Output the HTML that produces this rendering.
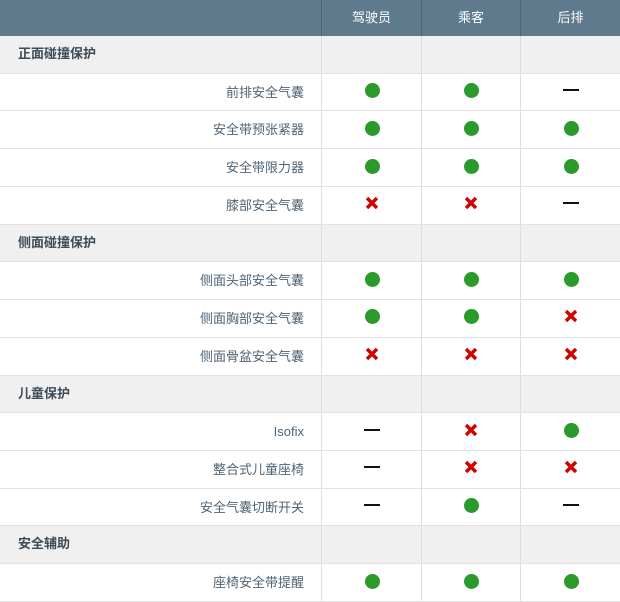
<!DOCTYPE html>
<html><head><meta charset="utf-8"><style>
*{margin:0;padding:0;box-sizing:border-box}
body{width:620px;height:600px;overflow:hidden;background:#fff;font-family:"Liberation Sans","Noto Sans CJK SC",sans-serif;position:relative}
.hd{position:absolute;left:0;top:0;width:620px;height:36px;background:#5e7a8c}
.hc{position:absolute;top:0;height:36px;line-height:36px;color:#fff;font-size:13px;text-align:center;border-left:1px solid #4c6475}
.row{position:absolute;left:0;width:620px;height:37.73px;border-bottom:1px solid #e2e2e2}
.sec{background:#f0f0f0}
.sec .t{position:absolute;left:18px;top:0;line-height:36px;font-size:13px;font-weight:bold;color:#3d4b57}
.lbl{position:absolute;right:316px;top:0;line-height:38px;font-size:13px;color:#4f6475}
.c{position:absolute;top:0;height:100%;border-left:1px solid #dedede}
.i{position:absolute;left:50%;top:50%}
.g{width:15px;height:15px;border-radius:50%;background:#2a9a2a;margin:-9px 0 0 -7px}
.d{width:16px;height:2px;background:#111;margin:-3px 0 0 -8px}
.x{margin:-10px 0 0 -8px;width:16px;height:16px}
</style></head><body>
<div class="hd"></div>
<div class="hc" style="left:321px;width:100px">驾驶员</div>
<div class="hc" style="left:421px;width:99px">乘客</div>
<div class="hc" style="left:520px;width:100px">后排</div>
<div id="t"></div>
<script>
var X='<svg class="i x" viewBox="0 0 16 16"><path d="M3 3L13 13M13 3L3 13" stroke="#d40000" stroke-width="3.4"/></svg>';
var G='<div class="i g"></div>',D='<div class="i d"></div>';
var m={g:G,x:X,d:D};
var rows=[["S","正面碰撞保护"],["前排安全气囊","ggd"],["安全带预张紧器","ggg"],["安全带限力器","ggg"],["膝部安全气囊","xxd"],
["S","侧面碰撞保护"],["侧面头部安全气囊","ggg"],["侧面胸部安全气囊","ggx"],["侧面骨盆安全气囊","xxx"],
["S","儿童保护"],["Isofix","dxg"],["整合式儿童座椅","dxx"],["安全气囊切断开关","dgd"],
["S","安全辅助"],["座椅安全带提醒","ggg"]];
var h='',L=[321,421,520],W=[100,99,100];
rows.forEach(function(r,i){
 var top=36+i*37.73;
 if(r[0]=="S"){h+='<div class="row sec" style="top:'+top+'px"><span class="t">'+r[1]+'</span>';
  for(var k=0;k<3;k++)h+='<div class="c" style="left:'+L[k]+'px;width:'+W[k]+'px"></div>';}
 else{h+='<div class="row" style="top:'+top+'px"><span class="lbl">'+r[0]+'</span>';
  for(var k=0;k<3;k++)h+='<div class="c" style="left:'+L[k]+'px;width:'+W[k]+'px">'+m[r[1][k]]+'</div>';}
 h+='</div>';
});
document.getElementById('t').innerHTML=h;
</script>
</body></html>
